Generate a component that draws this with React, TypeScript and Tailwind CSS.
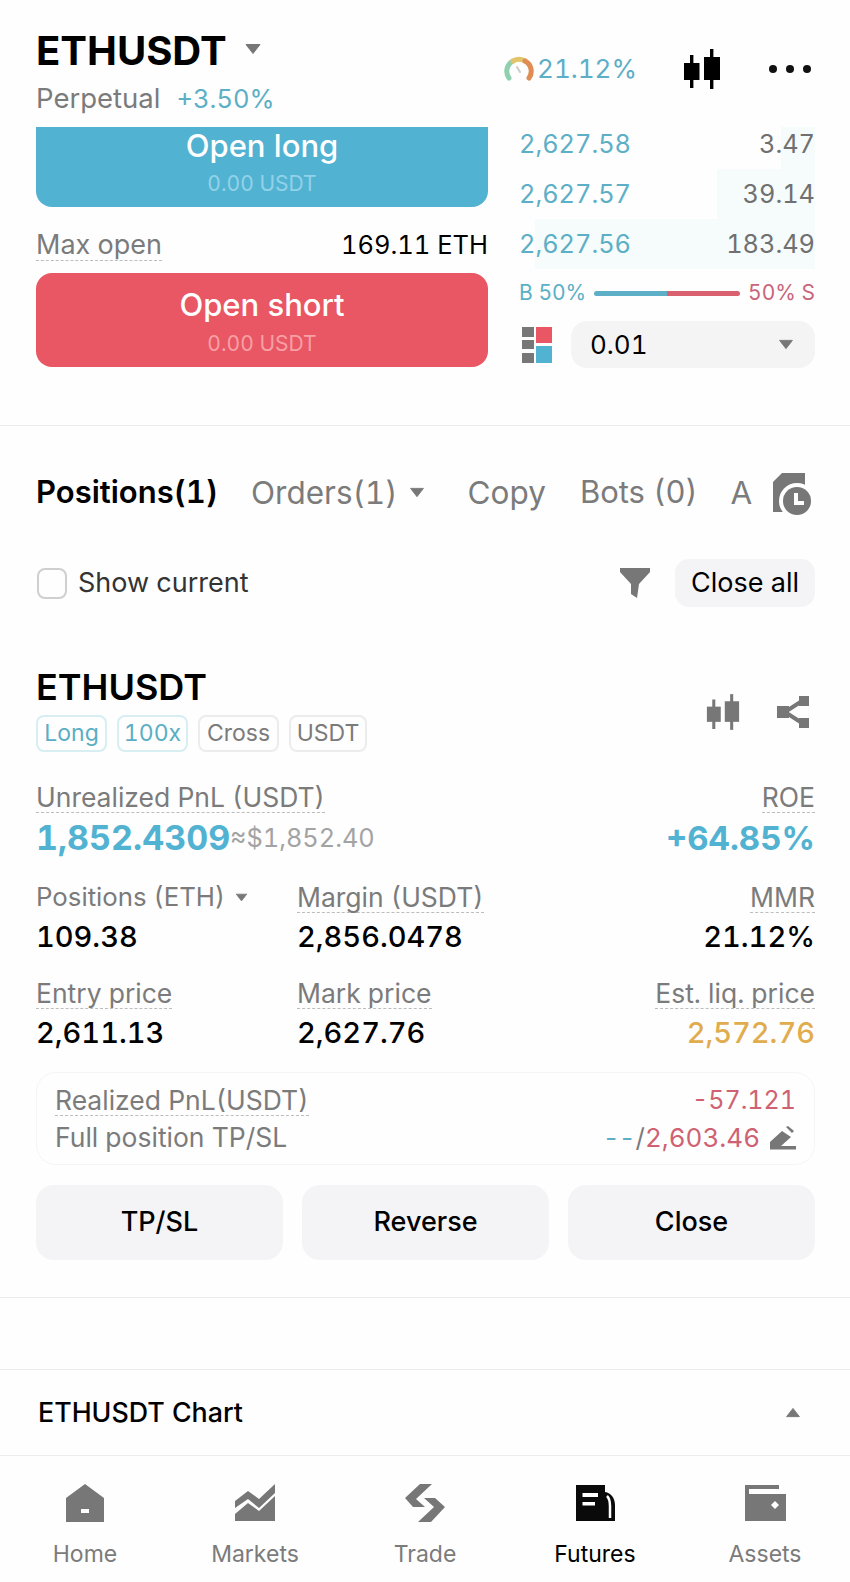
import type { ReactNode } from "react";

function Caret({ className = "", up = false }: { className?: string; up?: boolean }) {
  return (
    <svg viewBox="0 0 16 12" className={`shrink-0 ${className}`} fill="#777777">
      <path d={up ? "M8 1.5 L15 10.5 H1 Z" : "M1 1.5 H15 L8 10.5 Z"} strokeLinejoin="round" stroke="#777777" strokeWidth="1" />
    </svg>
  );
}

function Candles({ className = "", color = "#000" }: { className?: string; color?: string }) {
  return (
    <svg viewBox="0 0 38 40" className={className} fill={color}>
      <rect x="7" y="6" width="3.4" height="33" />
      <rect x="1" y="14" width="15.5" height="17" />
      <rect x="27" y="0" width="3.4" height="40" />
      <rect x="21" y="8" width="16" height="23" />
    </svg>
  );
}

function Dashed({ children, className = "" }: { children: ReactNode; className?: string }) {
  return <span className={`border-b border-dashed border-[#bdbdbd] leading-[30px] ${className}`}>{children}</span>;
}

function Tag({ children, on = false, className = "" }: { children: ReactNode; on?: boolean; className?: string }) {
  return (
    <span
      className={`flex h-[37px] items-center justify-center rounded-[8px] border-2 text-[23px] ${
        on ? "border-[#d7eef2] text-[#5aaec4]" : "border-[#ececec] text-[#7b7b7b]"
      } ${className}`}
    >
      {children}
    </span>
  );
}

function Depth({ price, qty, bar }: { price: string; qty: string; bar: string }) {
  return (
    <div className="relative flex h-[50px] items-center justify-between text-[25.3px]">
      <div className={`absolute inset-y-0 right-0 bg-[#f5fcfb] ${bar}`} />
      <span className="relative text-[#5cafc6]">{price}</span>
      <span className="relative text-[#707070]">{qty}</span>
    </div>
  );
}

function Stat({ label, value, right = false, dashed = true, valueClass = "text-black" }: { label: ReactNode; value: string; right?: boolean; dashed?: boolean; valueClass?: string }) {
  return (
    <div className={`flex flex-col ${right ? "items-end" : "items-start"}`}>
      <div className="flex h-[30px] items-center text-[26.5px] text-[#7b7b7b]">{dashed ? <Dashed>{label}</Dashed> : label}</div>
      <div className={`mt-[7px] text-[29px] leading-[36px] font-medium ${valueClass}`}>{value}</div>
    </div>
  );
}

function ActionButton({ children }: { children: ReactNode }) {
  return (
    <button className="flex h-[75px] flex-1 items-center justify-center rounded-[18px] bg-[#f4f3f5] text-[27px] font-medium text-black">
      {children}
    </button>
  );
}

function NavItem({ label, active = false, children }: { label: string; active?: boolean; children: ReactNode }) {
  return (
    <div className="flex flex-1 flex-col items-center">
      <div className="flex h-[42px] items-center justify-center">{children}</div>
      <span className={`mt-[16px] text-[23px] leading-[28px] ${active ? "text-black" : "text-[#7b7b7b]"}`}>{label}</span>
    </div>
  );
}

export default function App() {
  return (
    <div className="h-[1582px] w-[850px] overflow-hidden bg-[#fefefe] font-['Inter',sans-serif] tabular-nums">
      {/* top bar */}
      <header className="flex h-[127px] justify-between px-[36px]">
        <div className="pt-[28px]">
          <div className="flex items-center">
            <span className="text-[40px] leading-[46px] font-bold text-black">ETHUSDT</span>
            <Caret className="mt-[-4px] ml-[18px] h-[12px] w-[16px]" />
          </div>
          <div className="mt-[4px] flex items-baseline">
            <span className="text-[27.5px] leading-[40px] text-[#7b7b7b]">Perpetual</span>
            <span className="ml-[16px] text-[25.5px] text-[#5cafc6]">+3.50%</span>
          </div>
        </div>
        <div className="flex items-center pt-[21px] pr-[3px] pb-[11px]">
          <svg viewBox="0 0 30 26" className="h-[26px] w-[30px]" fill="none" strokeWidth="5" strokeLinecap="round">
            <path d="M5 22 A11.5 11.5 0 0 1 9 5" stroke="#8fd0b0" />
            <path d="M9 5 A11.5 11.5 0 0 1 21 5" stroke="#e3c46b" />
            <path d="M21 5 A11.5 11.5 0 0 1 25 22" stroke="#df8c55" />
            <path d="M13 11 L16 16" stroke="#cccccc" strokeWidth="2" />
          </svg>
          <span className="ml-[3px] text-[26px] text-[#5cafc6]">21.12%</span>
          <Candles className="ml-[46px] h-[40px] w-[38px]" />
          <div className="ml-[48px] flex gap-[9px]">
            <span className="h-[8px] w-[8px] rounded-full bg-[#111]" />
            <span className="h-[8px] w-[8px] rounded-full bg-[#111]" />
            <span className="h-[8px] w-[8px] rounded-full bg-[#111]" />
          </div>
        </div>
      </header>

      {/* trade panel */}
      <section className="flex h-[299px] items-start gap-[31px] border-b border-[#ececec] px-[35px] pl-[36px]">
        <div className="w-[452px]">
          <button className="flex h-[80px] w-full flex-col items-center rounded-b-[16px] bg-[#52b2d2] pt-[1px]">
            <span className="text-[31px] leading-[36px] font-medium text-white">Open long</span>
            <span className="mt-[7px] text-[21px] leading-[26px] text-[#92d2e8]">0.00 USDT</span>
          </button>
          <div className="flex h-[66px] items-center justify-between pt-[10px] text-[25.5px]">
            <Dashed className="text-[27px] text-[#7b7b7b]">Max open</Dashed>
            <span className="text-black">169.11 ETH</span>
          </div>
          <button className="flex h-[94px] w-full flex-col items-center rounded-[16px] bg-[#e95664] pt-[14px]">
            <span className="text-[31px] leading-[36px] font-medium text-white">Open short</span>
            <span className="mt-[8px] text-[21px] leading-[26px] text-[#f7a0a6]">0.00 USDT</span>
          </button>
        </div>
        <div className="flex-1">
          <div className="overflow-hidden">
            <div className="mt-[-8px]">
              <Depth price="2,627.58" qty="3.47" bar="w-[34px]" />
              <Depth price="2,627.57" qty="39.14" bar="w-[98px]" />
              <Depth price="2,627.56" qty="183.49" bar="w-[280px]" />
            </div>
          </div>
          <div className="mt-[6px] flex h-[36px] items-center text-[21px]">
            <span className="text-[#5cafc6]">B 50%</span>
            <div className="mx-[8px] flex h-[5px] flex-1 overflow-hidden rounded-full">
              <div className="w-1/2 bg-[#5cafc6]" />
              <div className="w-1/2 bg-[#d9606e]" />
            </div>
            <span className="text-[#c9657a]">50% S</span>
          </div>
          <div className="mt-[10px] flex items-center">
            <div className="ml-[3px] grid h-[36px] w-[32px] shrink-0 grid-cols-[12px_16px] gap-x-[2px]">
              <div className="flex flex-col justify-between">
                <span className="h-[10px] bg-[#777]" />
                <span className="h-[9px] bg-[#777]" />
                <span className="h-[10px] bg-[#777]" />
              </div>
              <div className="flex flex-col justify-between">
                <span className="h-[16px] bg-[#e95664]" />
                <span className="h-[17px] bg-[#52b2d2]" />
              </div>
            </div>
            <div className="ml-[17px] flex h-[47px] flex-1 items-center justify-between rounded-[16px] bg-[#f4f4f4] pr-[21px] pl-[19px] text-[26px] text-black">
              <span>0.01</span>
              <Caret className="h-[11px] w-[16px]" />
            </div>
          </div>
        </div>
      </section>

      {/* tabs */}
      <nav className="flex h-[133px] items-center px-[36px] text-[31.5px] whitespace-nowrap text-[#7b7b7b]">
        <span className="text-[31px] font-semibold text-black">Positions(1)</span>
        <span className="ml-[33px]">Orders(1)</span>
        <Caret className="ml-[11px] h-[11px] w-[16px]" />
        <span className="ml-[43px]">Copy</span>
        <span className="ml-[34px] text-[31px]">Bots (0)</span>
        <span className="ml-[33px]">A</span>
        <svg viewBox="0 0 40 42" className="mt-[2px] ml-[21px] h-[42px] w-[40px] shrink-0">
          <path d="M0 9 L9 0 H32 V39 H0 Z" fill="#777" />
          <circle cx="24" cy="28" r="18" fill="#fefefe" />
          <circle cx="24" cy="28" r="14" fill="#777" />
          <path d="M21 20 H25 V28 H31 V32 H21 Z" fill="#fefefe" />
        </svg>
      </nav>

      {/* filters */}
      <div className="flex h-[48px] items-center justify-between px-[35px] pl-[37px]">
        <label className="flex items-center">
          <span className="h-[31px] w-[30px] rounded-[8px] border-2 border-[#cfcfcf]" />
          <span className="ml-[11px] text-[27px] text-[#333]">Show current</span>
        </label>
        <div className="flex items-center">
          <svg viewBox="0 0 30 30" className="h-[30px] w-[30px]" fill="#777">
            <path d="M0 0 H30 V4 L19 16 L17 30 L11 26 V16 L0 4 Z" />
          </svg>
          <button className="ml-[25px] flex h-[48px] w-[140px] items-center justify-center rounded-[14px] bg-[#f4f4f6] text-[27px] text-black">
            Close all
          </button>
        </div>
      </div>

      {/* position card */}
      <section className="px-[35px] pl-[36px]">
        <div className="mt-[56px] flex items-center justify-between">
          <div>
            <div className="text-[36px] leading-[48px] font-semibold text-black">ETHUSDT</div>
            <div className="mt-[4px] flex gap-[10px]">
              <Tag on className="w-[71px]">Long</Tag>
              <Tag on className="w-[71px]">100x</Tag>
              <Tag className="w-[81px]">Cross</Tag>
              <Tag className="w-[78px]">USDT</Tag>
            </div>
          </div>
          <div className="mt-[9px] mr-[6px] flex items-center gap-[37px]">
            <Candles className="h-[36px] w-[34px]" color="#777" />
            <svg viewBox="0 0 32 32" className="h-[32px] w-[32px]" fill="none">
              <path d="M8 16 L25 5 M8 16 L25 27" stroke="#777" strokeWidth="4" />
              <rect x="0" y="10" width="12" height="12" fill="#777" />
              <rect x="22" y="0" width="10" height="10" fill="#777" />
              <rect x="22" y="22" width="10" height="10" fill="#777" />
            </svg>
          </div>
        </div>

        <div className="mt-[30px] flex items-start justify-between">
          <div>
            <div className="flex h-[30px] items-center text-[26.5px] text-[#7b7b7b]">
              <Dashed>Unrealized PnL (USDT)</Dashed>
            </div>
            <div className="mt-[6px] flex items-center">
              <span className="text-[34px] leading-[40px] font-bold text-[#52b2d2]">1,852.4309</span>
              <span className="text-[25.3px] text-[#a3a3a3]">≈$1,852.40</span>
            </div>
          </div>
          <div className="flex flex-col items-end">
            <div className="flex h-[30px] items-center text-[26.5px] text-[#7b7b7b]">
              <Dashed>ROE</Dashed>
            </div>
            <span className="mt-[6px] text-[33px] leading-[40px] font-bold text-[#52b2d2]">+64.85%</span>
          </div>
        </div>

        <div className="mt-[24px] grid grid-cols-[261px_1fr_auto]">
          <Stat
            dashed={false}
            label={
              <>
                <span className="text-[25.8px]">Positions (ETH)</span>
                <Caret className="ml-[10px] h-[9px] w-[13px]" />
              </>
            }
            value="109.38"
          />
          <Stat label="Margin (USDT)" value="2,856.0478" />
          <Stat right label="MMR" value="21.12%" />
        </div>

        <div className="mt-[23px] grid grid-cols-[261px_1fr_auto]">
          <Stat label="Entry price" value="2,611.13" />
          <Stat label="Mark price" value="2,627.76" />
          <Stat right label="Est. liq. price" value="2,572.76" valueClass="text-[#e0ac4e]" />
        </div>

        <div className="mt-[21px] flex h-[93px] flex-col justify-center rounded-[20px] border border-[#f5f5f5] pt-[2px] pr-[18px] pl-[18px] text-[26.5px]">
          <div className="flex h-[36px] items-center justify-between">
            <Dashed className="text-[#7b7b7b]">Realized PnL(USDT)</Dashed>
            <span className="text-[25px] text-[#cf6272]">-57.121</span>
          </div>
          <div className="flex h-[38px] items-center justify-between">
            <span className="text-[#7b7b7b]">Full position TP/SL</span>
            <div className="flex items-center text-[26px]">
              <span className="tracking-[-4px] text-[#5cafc6]">- -</span>
              <span className="ml-[4px] text-[#7b7b7b]">/</span>
              <span className="text-[#cf6272]">2,603.46</span>
              <svg viewBox="0 0 26 24" className="ml-[10px] h-[24px] w-[26px]" fill="#777">
                <path d="M0 20 V16 L12 5 L21 11 L11 20 Z" />
                <path d="M16 1 L18 0 L24 5 L22 7 Z" />
                <rect x="0" y="20" width="26" height="3.5" />
              </svg>
            </div>
          </div>
        </div>

        <div className="mt-[20px] flex gap-[19px]">
          <ActionButton>TP/SL</ActionButton>
          <ActionButton>Reverse</ActionButton>
          <ActionButton>Close</ActionButton>
        </div>
      </section>

      <div className="mt-[37px] h-[73px] border-y border-[#ececec]" />

      {/* chart row */}
      <div className="flex h-[86px] items-center justify-between border-b border-[#ececec] pr-[49px] pl-[38px]">
        <span className="text-[26.8px] font-medium text-black">ETHUSDT Chart</span>
        <Caret up className="h-[11px] w-[16px]" />
      </div>

      {/* bottom nav */}
      <footer className="flex pt-[26px]">
        <NavItem label="Home">
          <svg viewBox="0 0 38 38" className="h-[38px] w-[38px]" fill="#777">
            <path fillRule="evenodd" d="M19 0 L38 14 V38 H0 V14 Z M15 25 V29 H23 V25 Z" />
          </svg>
        </NavItem>
        <NavItem label="Markets">
          <svg viewBox="0 0 40 38" className="h-[38px] w-[40px]" fill="#777">
            <path d="M0 17 L13 7 L24 15 L40 0 V9 L24 24 L13 15 L0 24 Z" />
            <path d="M0 30 L13 19 L24 27 L40 12 V37 H0 Z" />
          </svg>
        </NavItem>
        <NavItem label="Trade">
          <svg viewBox="0 0 40 38" className="h-[38px] w-[40px]" fill="#777">
            <path d="M15 0 H27 L11 15 L20 23 H8 L0 14 Z" />
            <path d="M19 14 H30 L40 23 L26 38 H13 L29 23 Z" />
          </svg>
        </NavItem>
        <NavItem label="Futures" active>
          <svg viewBox="0 0 39 36" className="h-[36px] w-[39px]">
            <path d="M0 0 H29 V7 C35 8 39 13 39 20 V36 H0 Z" fill="#0a0a0a" />
            <rect x="6.5" y="8" width="15.5" height="4" fill="#fff" />
            <rect x="6.5" y="17" width="12.5" height="3.5" fill="#fff" />
            <path d="M31 11 C33 13 34 17 34 21 V33" fill="none" stroke="#fff" strokeWidth="2.5" />
          </svg>
        </NavItem>
        <NavItem label="Assets">
          <svg viewBox="0 0 41 36" className="h-[36px] w-[41px]" fill="#777">
            <rect x="0" y="0" width="34" height="4" />
            <path fillRule="evenodd" d="M0 9 H41 V36 H0 Z M30 16 L26 20 L30 24 L34 20 Z" />
            <rect x="0" y="0" width="4" height="12" />
          </svg>
        </NavItem>
      </footer>
    </div>
  );
}
